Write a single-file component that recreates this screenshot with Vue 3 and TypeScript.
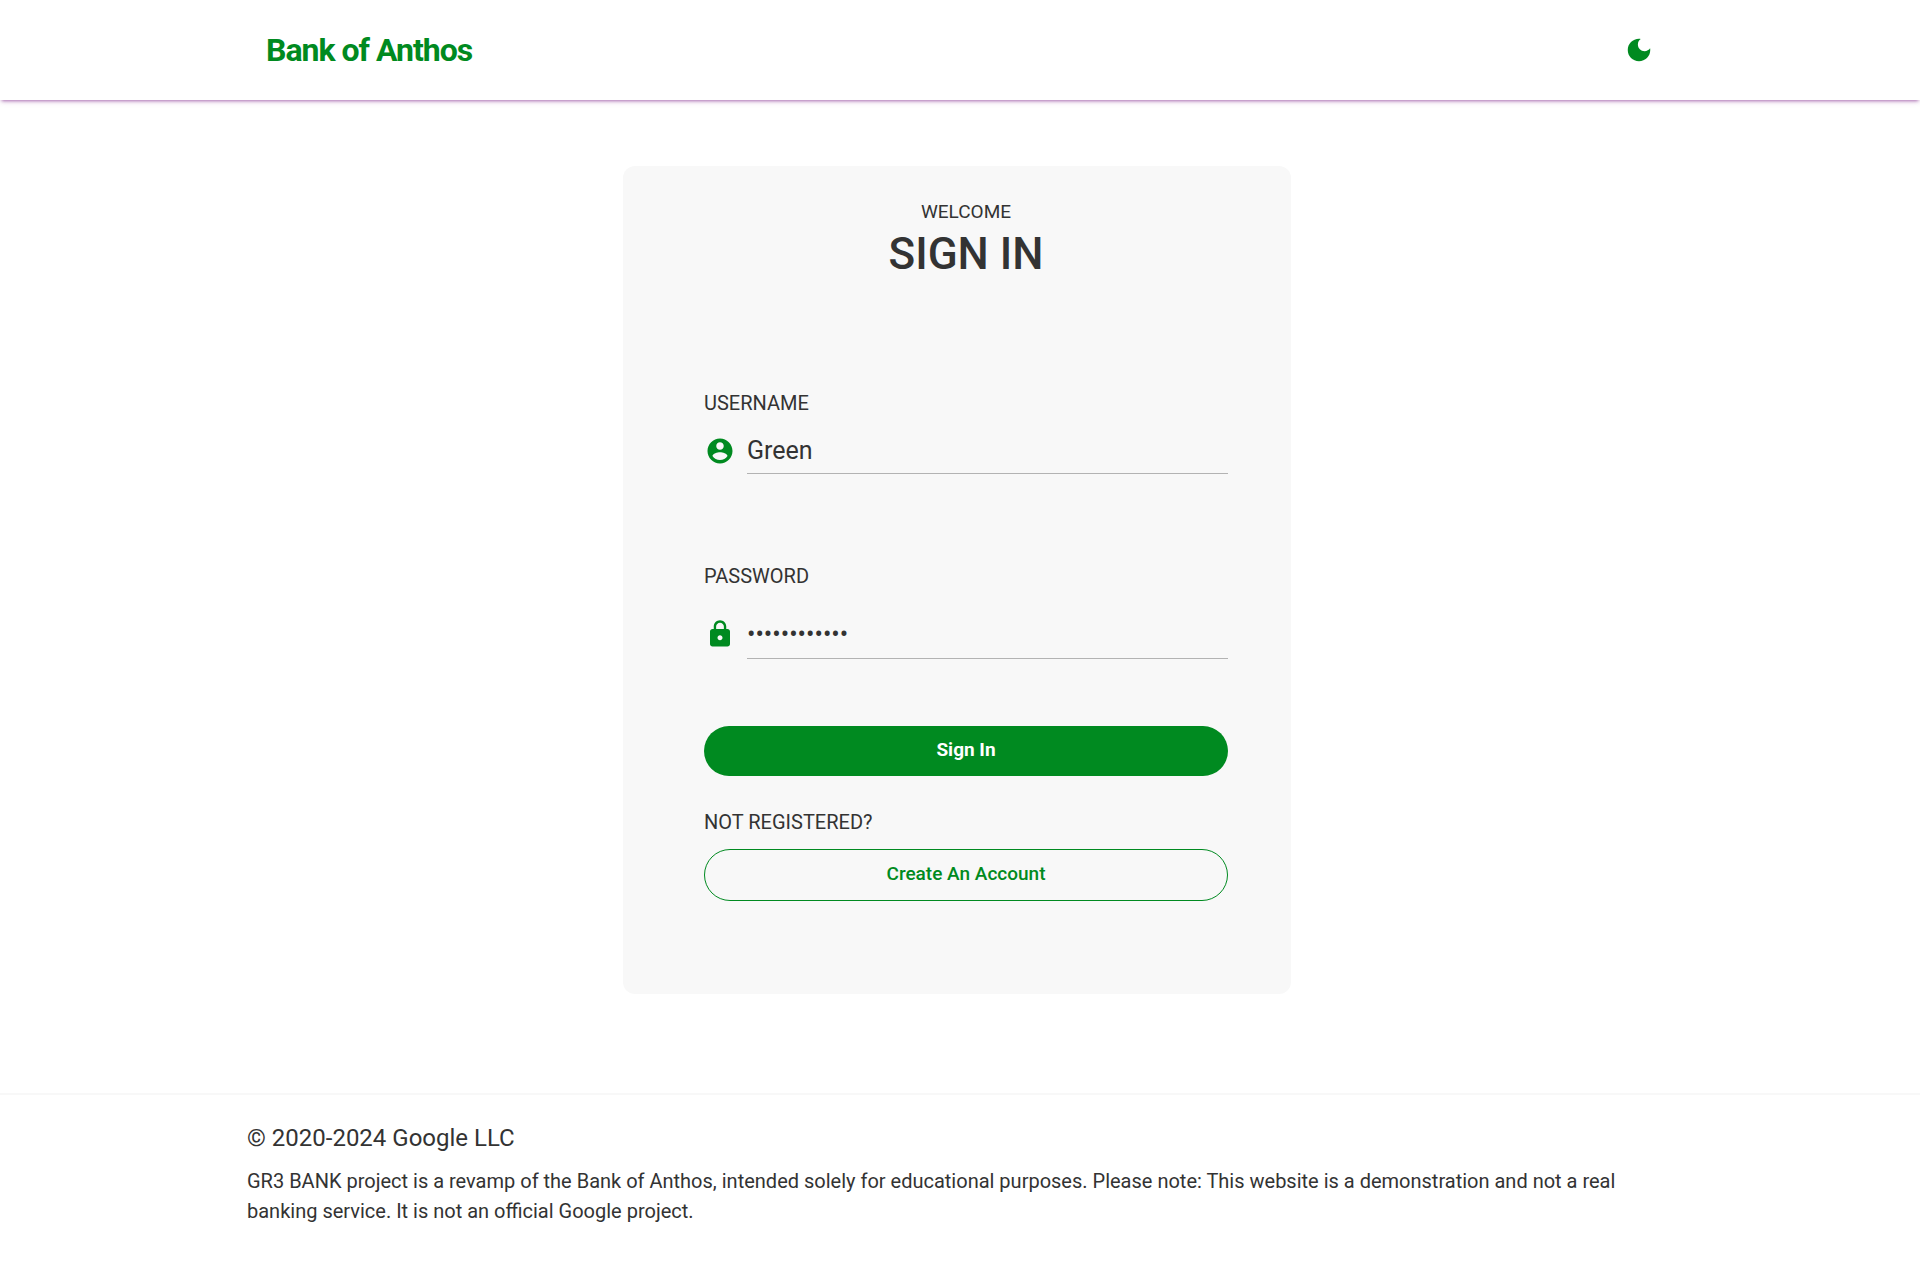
<script setup lang="ts">
import { ref } from 'vue'

const username = ref<string>('Green')
const password = ref<string>('bankofanthos')
</script>

<template>
  <div class="page">
    <header class="header">
      <div class="container header-row">
        <a class="brand" href="#">Bank of Anthos</a>
        <button class="theme-toggle" type="button" aria-label="Toggle dark theme">
          <svg class="icon" viewBox="0 0 24 24" aria-hidden="true">
            <path d="M12 3c-4.97 0-9 4.03-9 9s4.03 9 9 9 9-4.03 9-9c0-.46-.04-.92-.1-1.36-.98 1.37-2.58 2.26-4.4 2.26-2.98 0-5.4-2.42-5.4-5.4 0-1.81.89-3.42 2.26-4.4C12.92 3.04 12.46 3 12 3z" />
          </svg>
        </button>
      </div>
    </header>

    <main class="main">
      <section class="card">
        <p class="welcome">WELCOME</p>
        <h1 class="title">SIGN IN</h1>

        <form class="form" @submit.prevent>
          <label class="label" for="username">USERNAME</label>
          <div class="field">
            <svg class="icon" viewBox="0 0 24 24" aria-hidden="true">
              <path d="M12 2C6.48 2 2 6.48 2 12s4.48 10 10 10 10-4.48 10-10S17.52 2 12 2zm0 3c1.66 0 3 1.34 3 3s-1.34 3-3 3-3-1.34-3-3 1.34-3 3-3zm0 14.2c-2.5 0-4.71-1.28-6-3.22.03-1.99 4-3.08 6-3.08 1.99 0 5.97 1.09 6 3.08-1.29 1.94-3.5 3.22-6 3.22z" />
            </svg>
            <input id="username" v-model="username" class="input" type="text" autocomplete="username" />
          </div>

          <label class="label" for="password">PASSWORD</label>
          <div class="field field-password">
            <svg class="icon" viewBox="0 0 24 24" aria-hidden="true">
              <path d="M18 8h-1V6c0-2.76-2.24-5-5-5S7 3.24 7 6v2H6c-1.1 0-2 .9-2 2v10c0 1.1.9 2 2 2h12c1.1 0 2-.9 2-2V10c0-1.1-.9-2-2-2zm-6 9c-1.1 0-2-.9-2-2s.9-2 2-2 2 .9 2 2-.9 2-2 2zm3.1-9H8.9V6c0-1.71 1.39-3.1 3.1-3.1s3.1 1.39 3.1 3.1v2z" />
            </svg>
            <input id="password" v-model="password" class="input" type="password" autocomplete="current-password" />
          </div>

          <button class="button button-primary" type="submit">Sign In</button>
        </form>

        <p class="label">NOT REGISTERED?</p>
        <a class="button button-outline" href="#">Create An Account</a>
      </section>
    </main>

    <footer class="footer">
      <div class="container">
        <p class="copyright">© 2020-2024 Google LLC</p>
        <p class="note">
          GR3 BANK project is a revamp of the Bank of Anthos, intended solely for educational purposes. Please note:
          This website is a demonstration and not a real banking service. It is not an official Google project.
        </p>
      </div>
    </footer>
  </div>
</template>

<style>
body {
  margin: 0;
  background: #fff;
}
</style>

<style scoped>
.page {
  --green: #008a20;
  --text: #333;
  font: 400 20px/30px Roboto, sans-serif;
  color: var(--text);
}

.page * {
  box-sizing: border-box;
}

p,
h1 {
  margin: 0;
}

.container {
  max-width: 1426px;
  margin: 0 auto;
}

.header {
  box-shadow: 0 3px 3px -2px rgb(100 0 110 / 45%), 0 1px 6px rgb(128 0 140 / 22%);
}

.header-row {
  display: flex;
  align-items: center;
  justify-content: space-between;
  height: 100px;
  padding: 0 19px;
}

.brand {
  font-size: 32px;
  font-weight: 700;
  line-height: 48px;
  letter-spacing: -1px;
  color: var(--green);
  text-decoration: none;
}

.theme-toggle {
  display: flex;
  padding: 0;
  border: 0;
  background: none;
  cursor: pointer;
}

.icon {
  flex: none;
  width: 30px;
  height: 30px;
  fill: var(--green);
}

.main {
  padding: 66px 6px 99px 0;
}

.card {
  max-width: 668px;
  margin: 0 auto;
  padding: 31px 63px 93px 81px;
  border-radius: 12px;
  background: #f8f8f8;
}

.welcome {
  font-size: 19px;
  text-align: center;
}

.title {
  font-size: 44px;
  font-weight: 500;
  line-height: 54px;
  text-align: center;
}

.form {
  padding: 107px 0 31px;
}

.label {
  display: block;
}

.field {
  display: flex;
  align-items: center;
  gap: 12px;
  height: 46px;
  margin: 10px 0 87px;
  padding-left: 1px;
}

.field-password {
  height: 51px;
  margin: 17px 0 67px;
}

.input {
  flex: 1;
  min-width: 0;
  height: 100%;
  padding: 0;
  border: 0;
  border-bottom: 1px solid #b3b3b3;
  border-radius: 0;
  outline: 0;
  background: none;
  font: 400 25px/36px Roboto, sans-serif;
  color: var(--text);
}

.field-password .input {
  padding-top: 2px;
}

.button {
  display: block;
  width: 100%;
  padding: 9px 0 11px;
  border: 0;
  border-radius: 26px;
  font: 500 19px/30px Roboto, sans-serif;
  text-align: center;
  text-decoration: none;
  cursor: pointer;
}

.button-primary {
  background: var(--green);
  font-weight: 700;
  color: #fff;
}

.button-outline {
  margin-top: 12px;
  border: 1px solid var(--green);
  color: var(--green);
}

.footer {
  padding: 25px 24px 46px;
  border-top: 2px solid #f8f8f8;
}

.copyright {
  margin-bottom: 10px;
  font-size: 24px;
  line-height: 36px;
}
</style>
